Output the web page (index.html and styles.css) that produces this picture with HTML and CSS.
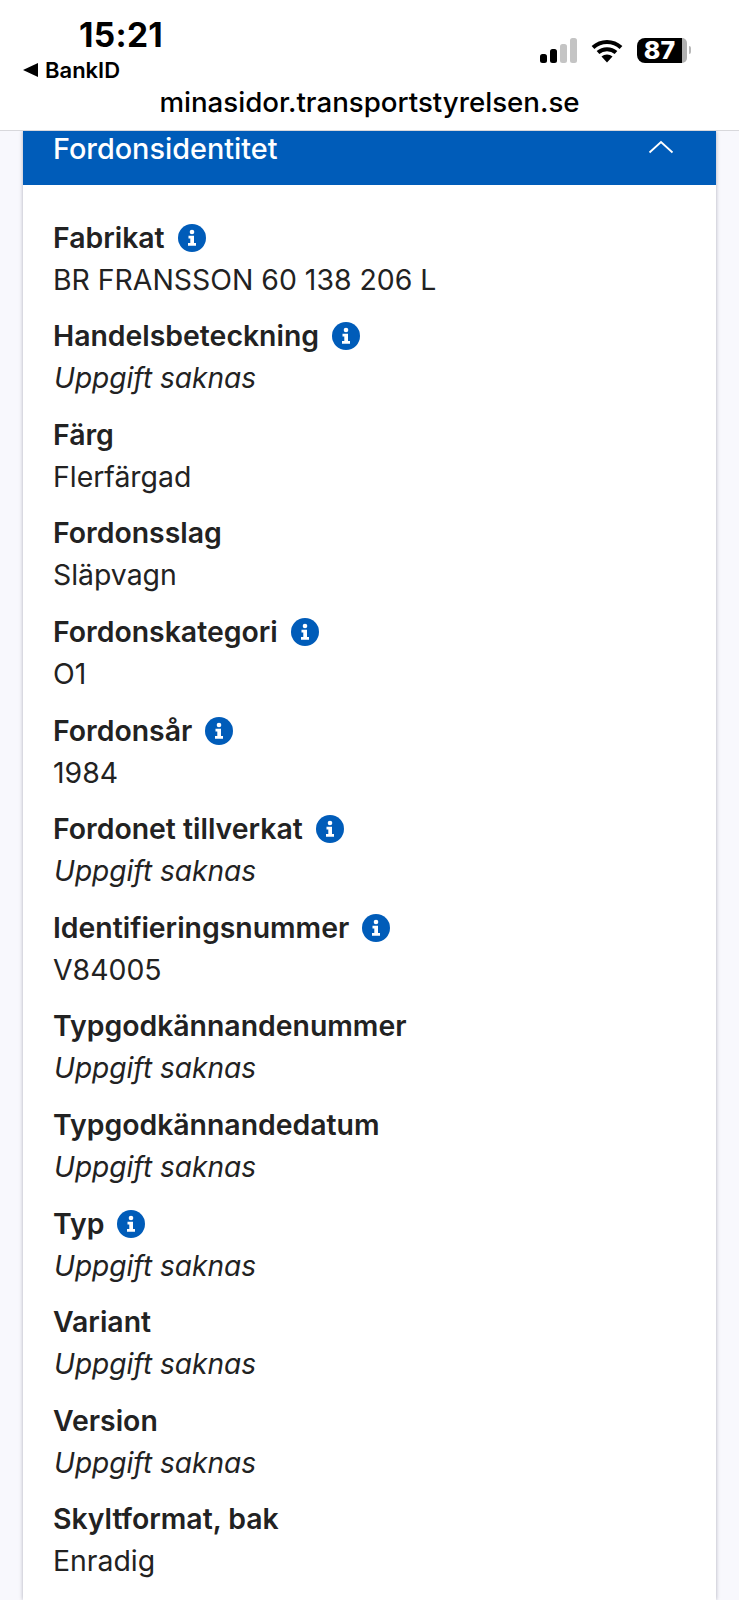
FILE: index.html
```html
<!DOCTYPE html>
<html lang="sv">
<head>
<meta charset="utf-8">
<title>Fordonsidentitet</title>
<link rel="stylesheet" href="styles.css">
</head>
<body>
<svg class="defs" width="0" height="0" aria-hidden="true">
  <symbol id="info" viewBox="0 0 28 28">
    <circle cx="14" cy="14" r="14" fill="#005cb9"/>
    <circle cx="14" cy="8" r="2.300" fill="#fff"/>
    <path d="M10.500 11.800H16V19H18V21.800H10V19H12.300V14.500H10.500Z" fill="#fff"/>
  </symbol>
</svg>
<header class="chrome">
  <div class="status">
    <div class="status-left">
      <div class="time">15:21</div>
      <div class="back"><span class="back-tri"></span>BankID</div>
    </div>
    <div class="status-right">
      <svg class="signal" width="37" height="25" viewBox="0 0 37 25">
        <rect x="0" y="16" width="7" height="9" rx="2.5" fill="#000"/>
        <rect x="10" y="11" width="7" height="14" rx="2.5" fill="#000"/>
        <rect x="20" y="6" width="7" height="19" rx="2.5" fill="#c4c4c4"/>
        <rect x="30" y="0" width="7" height="25" rx="2.5" fill="#c4c4c4"/>
      </svg>
      <svg class="wifi" width="32" height="25" viewBox="0 0 32 25">
        <path d="M2 9.500C10 2 22 2 30 9.500M7 14.500C12 10 20 10 25 14.500" fill="none" stroke="#000" stroke-width="4"/>
        <path d="M10.500 18.500C13.500 15.800 18.500 15.800 21.500 18.500L16 24.500Z" fill="#000"/>
      </svg>
      <div class="battery"><span class="battery-level">87</span><span class="battery-rest"></span><span class="battery-cap"></span></div>
    </div>
  </div>
  <div class="url">minasidor.transportstyrelsen.se</div>
</header>
<main class="card">
  <div class="card-head">
    <span class="card-title">Fordonsidentitet</span>
    <svg class="chevron" width="26" height="14" viewBox="0 0 26 14"><path d="M1.500 12.500L13 2L24.500 12.500" fill="none" stroke="#fff" stroke-width="1.800"/></svg>
  </div>
  <dl class="fields">
    <div class="field"><dt>Fabrikat <svg class="info"><use href="#info"/></svg></dt><dd>BR FRANSSON 60 138 206 L</dd></div>
    <div class="field"><dt>Handelsbeteckning <svg class="info"><use href="#info"/></svg></dt><dd class="missing">Uppgift saknas</dd></div>
    <div class="field"><dt>Färg</dt><dd>Flerfärgad</dd></div>
    <div class="field"><dt>Fordonsslag</dt><dd>Släpvagn</dd></div>
    <div class="field"><dt>Fordonskategori <svg class="info"><use href="#info"/></svg></dt><dd>O1</dd></div>
    <div class="field"><dt>Fordonsår <svg class="info"><use href="#info"/></svg></dt><dd>1984</dd></div>
    <div class="field"><dt>Fordonet tillverkat <svg class="info"><use href="#info"/></svg></dt><dd class="missing">Uppgift saknas</dd></div>
    <div class="field"><dt>Identifieringsnummer <svg class="info"><use href="#info"/></svg></dt><dd>V84005</dd></div>
    <div class="field"><dt>Typgodkännandenummer</dt><dd class="missing">Uppgift saknas</dd></div>
    <div class="field"><dt>Typgodkännandedatum</dt><dd class="missing">Uppgift saknas</dd></div>
    <div class="field"><dt>Typ <svg class="info"><use href="#info"/></svg></dt><dd class="missing">Uppgift saknas</dd></div>
    <div class="field"><dt>Variant</dt><dd class="missing">Uppgift saknas</dd></div>
    <div class="field"><dt>Version</dt><dd class="missing">Uppgift saknas</dd></div>
    <div class="field"><dt>Skyltformat, bak</dt><dd>Enradig</dd></div>
  </dl>
</main>
</body>
</html>
```
FILE: styles.css
```css
* { box-sizing: border-box; }
html, body { margin: 0; height: 1600px; overflow: hidden; }
body {
  background: #f8f8fd;
  font-family: Inter, "Liberation Sans", sans-serif;
  color: #222;
}
.defs { position: absolute; }
.chrome {
  height: 131px;
  background: #fff;
  border-bottom: 1px solid #d8d8dc;
  padding-top: 16px;
  color: #000;
  position: relative;
  z-index: 1;
}
.status { display: flex; justify-content: space-between; height: 70px; padding-left: 23px; }
.status-left { display: flex; flex-direction: column; }
.time { font-size: 33.500px; font-weight: 700; line-height: 38px; margin-left: 56px; letter-spacing: 0.3px; }
.back { display: flex; align-items: center; gap: 7px; font-size: 22px; font-weight: 600; line-height: 24px; margin-top: 4px; }
.back-tri { width: 0; height: 0; border-style: solid; border-width: 7px 15px 7px 0; border-color: transparent #000 transparent transparent; }
.status-right { display: flex; align-items: center; gap: 14px; padding: 2px 48px 0 0; height: 66px; }
.battery { display: flex; align-items: center; }
.battery-level {
  width: 45px; height: 25px; background: #000; color: #fff;
  border-radius: 8px 0 0 8px; font-size: 25px; font-weight: 800; line-height: 25px; text-align: center;
}
.battery-rest { width: 5px; height: 25px; background: #b0b0b0; border-radius: 0 8px 8px 0; }
.battery-cap { width: 2px; height: 8px; background: #b8b8b8; margin-left: 2px; border-radius: 0 2px 2px 0; }
.url { text-align: center; font-size: 27.700px; font-weight: 500; line-height: 34px; margin-top: -1px; }
.card {
  margin: 0 23px;
  background: #fff;
  height: 1469px;
  box-shadow: 0 0 4px rgba(0,0,30,.3);
}
.card-head {
  height: 54px;
  background: #005cb9;
  color: #fff;
  display: flex;
  justify-content: space-between;
  padding: 0 42px 0 30px;
}
.card-title { font-size: 28.800px; font-weight: 500; line-height: 35px; }
.chevron { margin-top: 9px; }
.fields { margin: 0; padding: 31.500px 30px 0; }
.field { height: 98.620px; }
dt { font-size: 28.400px; font-weight: 600; line-height: 42px; display: flex; align-items: center; gap: 13px; }
dd { margin: 0; font-size: 28.400px; line-height: 42px; }
.missing { font-style: italic; font-size: 28.100px; padding-left: 1px; }
.info { width: 28px; height: 28px; flex: none; }
```
